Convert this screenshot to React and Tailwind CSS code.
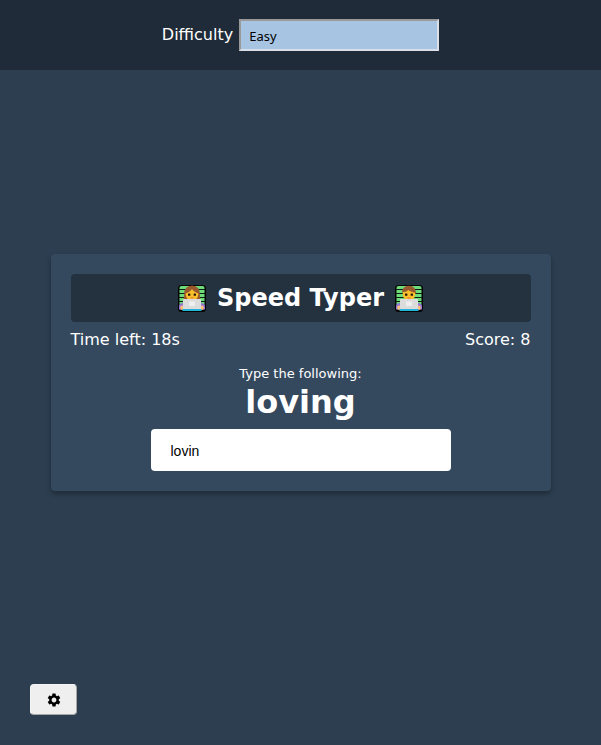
import { useState } from "react";
import { MdSettings } from "react-icons/md";

function Technologist({ longHair }) {
  return (
    <svg viewBox="0 0 28 28" className="h-7 w-7 shrink-0" aria-hidden="true">
      <rect x="0" y="1" width="28" height="27" rx="3.500" fill="#050505" />
      <rect x="1.500" y="2" width="25" height="20" rx="2" fill="#6fdc7c" />
      <path
        d="M1 5.500h26M1 9.500h26M1 13.500h26M1 17.500h26"
        stroke="#0b1f10"
        strokeWidth="1.100"
      />
      <path d="M1 25.500v-3c0-2 1.500-3.500 4-3.500h18c2.500 0 4 1.500 4 3.500v3z" fill="#9577d8" />
      {longHair && (
        <path d="M14 1.800c-4.500 0-7.800 3-7.800 7.500 0 2.500-.4 4-.7 6h17c-.3-2-.7-3.500-.7-6 0-4.500-3.300-7.500-7.800-7.500z" fill="#99592f" />
      )}
      <circle cx="14" cy="10.300" r="6.300" fill="#fcc02b" />
      <path
        d={
          longHair
            ? "M6.800 9.500C6.800 4.800 10 1.800 14 1.800s7.200 3 7.200 7.700C18.500 9 15.500 7.500 14 5 12.500 7.500 9.500 9 6.800 9.500z"
            : "M7.200 8.500C7 4.200 10 1.800 14 1.800c4.500 0 7.300 3.200 7 8.200L19.500 8.500C17 8.500 15 7.500 13.500 6 12 7.500 9.500 8 7.200 8.500z"
        }
        fill="#99592f"
      />
      <rect x="10" y="9.500" width="2.400" height="2.300" rx="0.600" fill="#2a1a10" />
      <rect x="15.600" y="9.500" width="2.400" height="2.300" rx="0.600" fill="#2a1a10" />
      <path d="M12.300 14h3.400" stroke="#e8743a" strokeWidth="1" />
      <ellipse cx="4" cy="23.800" rx="1.800" ry="2.200" fill="#fcc07a" />
      <ellipse cx="24" cy="23.800" rx="1.800" ry="2.200" fill="#fcc07a" />
      <rect x="5" y="15" width="18" height="10" rx="0.800" fill="#dcdcdc" />
      <rect x="11" y="17.500" width="6" height="4.500" rx="0.500" fill="#efefef" />
      <rect x="4.500" y="25" width="19" height="2" fill="#25b3d8" />
    </svg>
  );
}

export default function App() {
  const [difficulty, setDifficulty] = useState("easy");
  const [showSettings, setShowSettings] = useState(true);
  const [typed, setTyped] = useState("lovin");

  return (
    <div className="grid min-h-screen grid-cols-1 grid-rows-[1fr_auto_1fr] bg-[#2c3e50] font-['DejaVu_Sans',Verdana,sans-serif] text-base text-white">
      <header className="self-start">
        {showSettings && (
          <form className="flex h-[70px] items-center justify-center gap-[6px] bg-[#1f2b38]">
            <label htmlFor="difficulty">Difficulty</label>
            <select
              id="difficulty"
              value={difficulty}
              onChange={(e) => setDifficulty(e.target.value)}
              className="h-8 w-[200px] appearance-none border-2 border-t-[#9a9a9a] border-r-[#d9dfe8] border-b-[#d9dfe8] border-l-[#9a9a9a] bg-[#a7c5e3] px-2 pt-1 font-['Noto_Sans',Tahoma,sans-serif] text-[13px] text-black"
            >
              <option value="easy">Easy</option>
              <option value="medium">Medium</option>
              <option value="hard">Hard</option>
            </select>
          </form>
        )}
      </header>

      <main className="w-full max-w-[500px] justify-self-center rounded-[4px] bg-[#34495e] p-5 text-center shadow-[0_3px_5px_rgba(0,0,0,0.3)]">
        <h1 className="flex h-12 items-center justify-center gap-[11px] rounded-[4px] bg-[#243240] text-2xl font-bold">
          <Technologist longHair />
          <span>Speed Typer</span>
          <Technologist />
        </h1>
        <div className="mt-2 flex justify-between leading-5">
          <p>Time left: 18s</p>
          <p>Score: 8</p>
        </div>
        <label htmlFor="word" className="mt-4 block text-[13px] leading-4">
          Type the following:
        </label>
        <p className="text-[32px] leading-10 font-bold">loving</p>
        <input
          id="word"
          type="text"
          autoComplete="off"
          value={typed}
          onChange={(e) => setTyped(e.target.value)}
          className="mx-auto mt-[7px] block h-[42px] w-[300px] max-w-full rounded-[4px] bg-white px-5 pt-[2px] font-['Liberation_Sans',Arial,sans-serif] text-sm text-black"
        />
      </main>

      <div className="self-end px-[30px] pb-[30px]">
        <button
          type="button"
          aria-label="Settings"
          onClick={() => setShowSettings(!showSettings)}
          className="flex h-[31px] w-[47px] items-center justify-center rounded-[4px] border border-[#f5f5f5] border-r-[#a8a8a8] border-b-[#a8a8a8] bg-[#efefef] text-black"
        >
          <MdSettings className="size-4" aria-hidden="true" />
        </button>
      </div>
    </div>
  );
}
